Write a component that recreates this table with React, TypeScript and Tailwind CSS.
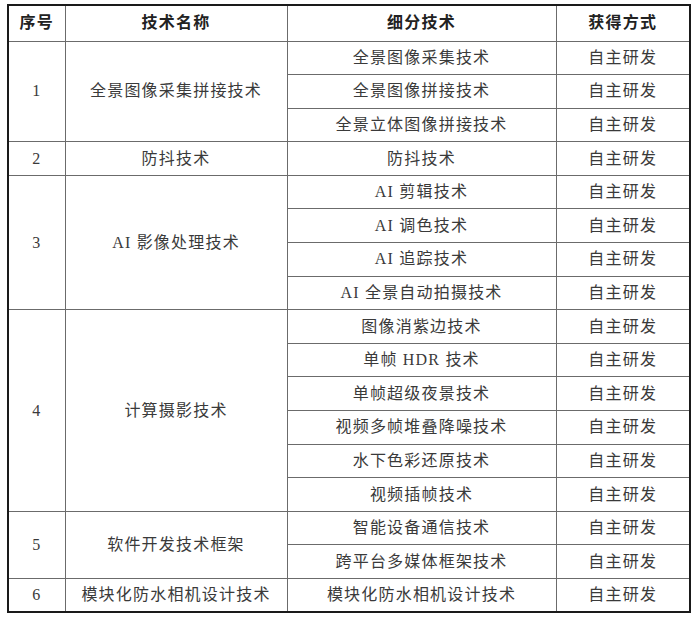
import React from 'react';

type Group = { no: string; name: string; subs: string[] };

const groups: Group[] = [
  { no: '1', name: '全景图像采集拼接技术', subs: ['全景图像采集技术', '全景图像拼接技术', '全景立体图像拼接技术'] },
  { no: '2', name: '防抖技术', subs: ['防抖技术'] },
  { no: '3', name: 'AI 影像处理技术', subs: ['AI 剪辑技术', 'AI 调色技术', 'AI 追踪技术', 'AI 全景自动拍摄技术'] },
  {
    no: '4',
    name: '计算摄影技术',
    subs: ['图像消紫边技术', '单帧 HDR 技术', '单帧超级夜景技术', '视频多帧堆叠降噪技术', '水下色彩还原技术', '视频插帧技术'],
  },
  { no: '5', name: '软件开发技术框架', subs: ['智能设备通信技术', '跨平台多媒体框架技术'] },
  { no: '6', name: '模块化防水相机设计技术', subs: ['模块化防水相机设计技术'] },
];

const cell = 'border border-[#6b6b6b] text-center align-middle p-0';

const App = () => {
  return (
    <div className="w-[700px] h-[617px] bg-white pt-[4px] pl-[7px]">
      <table
        className="border-collapse border-2 border-[#1a1a1a] text-[16px] text-[#3a3a3a] tracking-[1.2px]"
        style={{ fontFamily: '"Liberation Serif", "Noto Sans CJK SC", serif', tableLayout: 'fixed', width: 682 }}
      >
        <colgroup>
          <col style={{ width: 57 }} />
          <col style={{ width: 222 }} />
          <col style={{ width: 269 }} />
          <col style={{ width: 134 }} />
        </colgroup>
        <thead>
          <tr className="h-[36px] font-bold text-[#222]">
            <th className={cell}>序号</th>
            <th className={cell}>技术名称</th>
            <th className={cell}>细分技术</th>
            <th className={cell}>获得方式</th>
          </tr>
        </thead>
        <tbody>
          {groups.map((g) =>
            g.subs.map((s, i) => (
              <tr key={g.no + s} className="h-[33.6px]">
                {i === 0 && (
                  <>
                    <td className={cell} rowSpan={g.subs.length}>
                      {g.no}
                    </td>
                    <td className={cell} rowSpan={g.subs.length}>
                      {g.name}
                    </td>
                  </>
                )}
                <td className={cell}>{s}</td>
                <td className={cell}>自主研发</td>
              </tr>
            ))
          )}
        </tbody>
      </table>
    </div>
  );
};

export default App;
